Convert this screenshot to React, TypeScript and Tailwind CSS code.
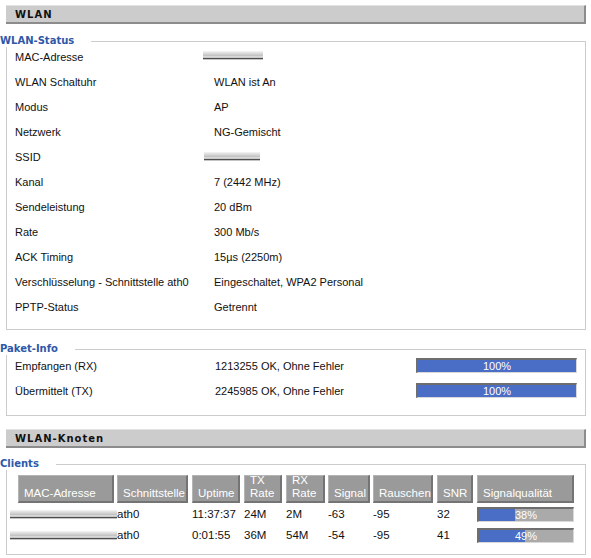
const body = { fontFamily: '"Liberation Sans", Arial, sans-serif' }
const heading = { fontFamily: '"DejaVu Sans", Verdana, sans-serif' }

const statusRows: [string, string | null][] = [
  ['MAC-Adresse', null],
  ['WLAN Schaltuhr', 'WLAN ist An'],
  ['Modus', 'AP'],
  ['Netzwerk', 'NG-Gemischt'],
  ['SSID', null],
  ['Kanal', '7 (2442 MHz)'],
  ['Sendeleistung', '20 dBm'],
  ['Rate', '300 Mb/s'],
  ['ACK Timing', '15µs (2250m)'],
  ['Verschlüsselung - Schnittstelle ath0', 'Eingeschaltet, WPA2 Personal'],
  ['PPTP-Status', 'Getrennt'],
]

const clients = [
  { iface: 'ath0', uptime: '11:37:37', tx: '24M', rx: '2M', signal: '-63', noise: '-95', snr: '32', q: 38 },
  { iface: 'ath0', uptime: '0:01:55', tx: '36M', rx: '54M', signal: '-54', noise: '-95', snr: '41', q: 49 },
]

function Blur({ w, className = '' }: { w: string; className?: string }) {
  return (
    <div
      className={`h-[9px] ${w} ${className} bg-[linear-gradient(to_bottom,#f4f4f4_0%,#d2d2d2_30%,#bdbdbd_50%,#e6e6e6_70%,#2a2a2a_82%,#ffffff_100%)] opacity-90`}
    />
  )
}

function SectionHeader({ title }: { title: string }) {
  return (
    <div className="h-[19px] bg-[#cccccc] border-t border-t-[#e2e2e2] border-b-2 border-b-[#8c8c8c] border-r-2 border-r-[#8c8c8c] pl-[9px] flex items-center">
      <span className="text-[10px] font-bold tracking-[1px] text-[#111]" style={heading}>
        {title}
      </span>
    </div>
  )
}

function Legend({ children, shift }: { children: string; shift: string }) {
  return (
    <legend
      className={`${shift} pr-[17px] bg-white text-[10px] font-bold leading-[12px] text-[#2e58a8]`}
      style={heading}
    >
      {children}
    </legend>
  )
}

function Bar({ pct, w }: { pct: number; w: string }) {
  return (
    <div className={`relative ${w} h-[15px] bg-[#aaaaaa] border-t-2 border-l-2 border-t-[#6e6e6e] border-l-[#6e6e6e] border-b border-r border-b-[#d8d8d8] border-r-[#d8d8d8]`}>
      <div className="h-full bg-[#4a6dc6]" style={{ width: `${pct}%` }} />
      <div className="absolute inset-0 flex items-center justify-center text-[11px] leading-none text-white">
        {pct}%
      </div>
    </div>
  )
}

const headers: { label: string[]; w: string; cell: string }[] = [
  { label: ['MAC-Adresse'], w: 'w-[99px]', cell: 'w-[96px]' },
  { label: ['Schnittstelle'], w: 'w-[75px]', cell: 'w-[71px]' },
  { label: ['Uptime'], w: 'w-[52px]', cell: 'w-[48px]' },
  { label: ['TX', 'Rate'], w: 'w-[42px]', cell: 'w-[38px]' },
  { label: ['RX', 'Rate'], w: 'w-[42px]', cell: 'w-[39px]' },
  { label: ['Signal'], w: 'w-[45px]', cell: 'w-[42px]' },
  { label: ['Rauschen'], w: 'w-[64px]', cell: 'w-[60px]' },
  { label: ['SNR'], w: 'w-[40px]', cell: 'w-[36px]' },
  { label: ['Signalqualität'], w: 'w-[97px]', cell: 'w-[97px]' },
]

export default function App() {
  return (
    <div className="w-[591px] h-[558px] bg-white text-[#111] text-[11px] overflow-hidden" style={body}>
      <div className="ml-[6px] w-[580px] pt-[5px]">
        <SectionHeader title="WLAN" />

        {/* WLAN-Status */}
        <fieldset className="mt-[11px] border border-[#cccccc] pt-[3px] pb-[4px] pl-[8px]">
          <Legend shift="-ml-[15px]">WLAN-Status</Legend>
          {statusRows.map(([label, value]) => (
            <div key={label} className="h-[25px] flex items-start">
              <div className="w-[199px] leading-[14px]">{label}</div>
              <div className="leading-[14px]">
                {value ?? (
                  <Blur
                    w={label === 'SSID' ? 'w-[56px] -ml-[10px] mt-[2px] opacity-60' : 'w-[60px] -ml-[11px] mt-[1px]'}
                  />
                )}
              </div>
            </div>
          ))}
        </fieldset>

        {/* Paket-Info */}
        <fieldset className="mt-[13px] border border-[#cccccc] pt-[3px] pb-[7px] pl-[8px]">
          <Legend shift="-ml-[15px]">Paket-Info</Legend>
          {[
            ['Empfangen (RX)', '1213255 OK, Ohne Fehler'],
            ['Übermittelt (TX)', '2245985 OK, Ohne Fehler'],
          ].map(([label, value]) => (
            <div key={label} className="h-[25px] flex items-start">
              <div className="w-[200px] leading-[15px] pt-px">{label}</div>
              <div className="w-[201px] leading-[15px] pt-px">{value}</div>
              <Bar pct={100} w="w-[161px]" />
            </div>
          ))}
        </fieldset>

        <div className="mt-[13px]">
          <SectionHeader title="WLAN-Knoten" />
        </div>

        {/* Clients */}
        <fieldset className="mt-[10px] border border-[#cccccc] pt-[5px] pb-[9px] pl-[11px]">
          <Legend shift="-ml-[18px]">Clients</Legend>
          <div className="flex">
            {headers.map((h) => (
              <div key={h.label.join()} className={h.w}>
                <div
                  className={`${h.cell} h-[28px] bg-[#9a9a9a] border-t border-l border-t-[#b4b4b4] border-l-[#b4b4b4] border-b-2 border-r-2 border-b-[#747474] border-r-[#747474] text-white text-[11.5px] leading-[13px] pl-[5px] flex flex-col justify-end pb-px whitespace-nowrap overflow-hidden`}
                >
                  {h.label.map((l) => (
                    <span key={l}>{l}</span>
                  ))}
                </div>
              </div>
            ))}
          </div>
          {clients.map((c, i) => (
            <div key={i} className="flex items-center h-[19px] mt-[2px] text-[11.5px]">
              <div className="w-[99px]">
                <Blur w="w-[107px] -ml-[8px]" />
              </div>
              <div className="w-[75px]">{c.iface}</div>
              <div className="w-[52px]">{c.uptime}</div>
              <div className="w-[42px]">{c.tx}</div>
              <div className="w-[42px]">{c.rx}</div>
              <div className="w-[45px]">{c.signal}</div>
              <div className="w-[64px]">{c.noise}</div>
              <div className="w-[40px]">{c.snr}</div>
              <Bar pct={c.q} w="w-[97px]" />
            </div>
          ))}
        </fieldset>
      </div>
    </div>
  )
}
